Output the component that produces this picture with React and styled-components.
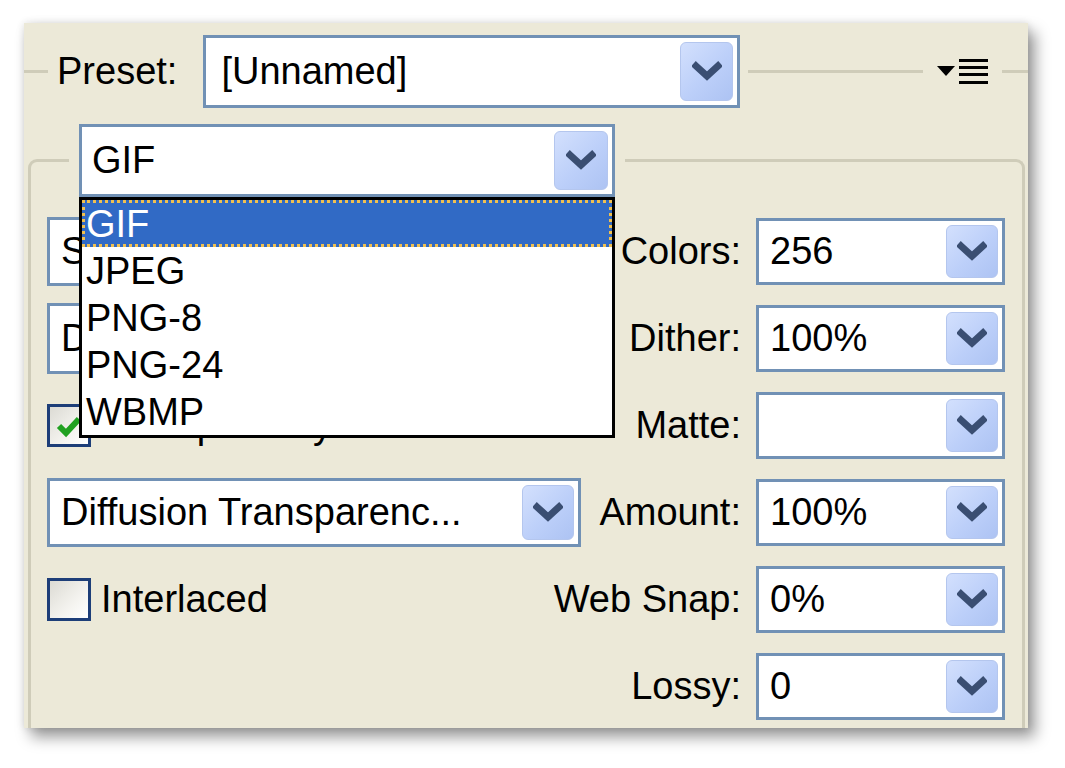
import React from 'react';
import styled, { createGlobalStyle } from 'styled-components';

const GlobalStyle = createGlobalStyle`
  html, body {
    margin: 0;
    padding: 0;
    background: #ffffff;
  }
  body {
    font-family: 'Liberation Sans', Arial, sans-serif;
    color: #000000;
  }
`

const Page = styled.div`
  width: 1065px;
  height: 768px;
  padding: 23px 0 0 24px;
  box-sizing: border-box;
`

const Panel = styled.div`
  width: 1004px;
  height: 705px;
  background: #ece9d8;
  box-sizing: border-box;
  padding-top: 12px;
  overflow: hidden;
  box-shadow: 7px 9px 14px rgba(0, 0, 0, 0.4), 0 0 8px rgba(0, 0, 0, 0.12);
`

const PresetRow = styled.div`
  display: flex;
  align-items: center;
  height: 73px;
`

const Rule = styled.div`
  height: 3px;
  background: #cfccb9;
  flex: ${p => (p.grow ? '1' : 'none')};
  width: ${p => (p.w ? p.w + 'px' : 'auto')};
  margin-left: ${p => p.ml || 0}px;
`

const PresetLabel = styled.span`
  font-size: 38px;
  margin: 0 26px 0 9px;
  white-space: nowrap;
`

const Combo = styled.div`
  position: relative;
  width: ${p => p.w}px;
  height: ${p => p.h || 67}px;
  box-sizing: border-box;
  border: 3px solid #7191b5;
  background: #ffffff;
  display: flex;
  align-items: center;
  padding: 0 4px 0 ${p => p.pad || 11}px;
  font-size: 38px;
  white-space: nowrap;
`

const ComboText = styled.span`
  flex: 1;
  overflow: hidden;
`

const DropButton = styled.div`
  width: ${p => p.w || 52}px;
  align-self: stretch;
  margin: 4px 0;
  box-sizing: border-box;
  border-radius: 6px;
  border: 1px solid #b4c6ee;
  background: linear-gradient(135deg, #d3e0fd 0%, #bccff9 55%, #adc3f3 100%);
  display: flex;
  align-items: center;
  justify-content: center;
`

const MenuIcon = styled.div`
  display: flex;
  align-items: center;
  margin: 0 14px;
`

const Group = styled.fieldset`
  margin: 16px 3px 0 4px;
  padding: 21px 17px 0 16px;
  border: 3px solid #cfccb9;
  border-bottom: none;
  border-radius: 9px 9px 0 0;
  min-width: 0;
  height: 700px;
  box-sizing: border-box;
`

const FormatLegend = styled.legend`
  position: relative;
  margin-left: 22px;
  padding: 0 10px;
`

const FormatList = styled.ul`
  position: absolute;
  top: 100%;
  left: 10px;
  width: 536px;
  box-sizing: border-box;
  margin: 0;
  padding: 0;
  list-style: none;
  background: #ffffff;
  border: 3px solid #000000;
  z-index: 5;
`

const FormatItem = styled.li`
  height: 47px;
  line-height: 43px;
  box-sizing: border-box;
  padding-left: 1px;
  font-size: 38px;
  color: ${p => (p.active ? '#ffffff' : '#000000')};
  background: ${p => (p.active ? '#316ac5' : 'transparent')};
  border: 3px dotted ${p => (p.active ? '#f0c050' : 'transparent')};
`

const Grid = styled.div`
  display: grid;
  grid-template-columns: 500px minmax(0, 1fr) 249px;
  grid-auto-rows: 67px;
  row-gap: 20px;
  align-items: center;
`

const FieldLabel = styled.span`
  grid-column: 2;
  justify-self: end;
  padding-right: 15px;
  font-size: 38px;
  white-space: nowrap;
`

const Left = styled.div`
  grid-column: 1;
`

const Right = styled.div`
  grid-column: 3;
`

const CheckRow = styled.label`
  display: flex;
  align-items: center;
  gap: 10px;
  font-size: 38px;
  white-space: nowrap;
`

const CheckBox = styled.span`
  flex: none;
  width: 44px;
  height: 43px;
  box-sizing: border-box;
  border: 3px solid #1d3e78;
  background: linear-gradient(135deg, #dcdbd4 0%, #f4f3ef 60%, #ffffff 100%);
  display: flex;
  align-items: center;
  justify-content: center;
`

function Chevron() {
  return (
    <svg width="30" height="22" viewBox="0 0 30 22">
      <polyline
        points="4,5 15,15 26,5"
        fill="none"
        stroke="#3a4e72"
        strokeWidth="7"
        strokeLinecap="square"
        strokeLinejoin="miter"
      />
    </svg>
  );
}

function Select({ value, w, h, pad, bw }) {
  return (
    <Combo w={w} h={h} pad={pad}>
      <ComboText>{value}</ComboText>
      <DropButton w={bw}>
        <Chevron />
      </DropButton>
    </Combo>
  );
}

function Check({ checked, label }) {
  return (
    <CheckRow>
      <CheckBox>
        {checked && (
          <svg width="26" height="24" viewBox="0 0 26 24">
            <polyline points="3,12 10,19 23,5" fill="none" stroke="#21a121" strokeWidth="6" />
          </svg>
        )}
      </CheckBox>
      {label}
    </CheckRow>
  );
}

const formats = ['GIF', 'JPEG', 'PNG-8', 'PNG-24', 'WBMP'];

export default function App() {
  return (
    <Page>
      <GlobalStyle />
      <Panel>
        <PresetRow>
          <Rule w={24} />
          <PresetLabel>Preset:</PresetLabel>
          <Select value="[Unnamed]" w={537} h={73} pad={15} bw={53} />
          <Rule grow ml={8} />
          <MenuIcon>
            <svg width="51" height="27" viewBox="0 0 51 27">
              <polygon points="0,8 18,8 9,18" fill="#000" />
              <rect x="22" y="1" width="29" height="3" fill="#000" />
              <rect x="22" y="8" width="29" height="3" fill="#000" />
              <rect x="22" y="15" width="29" height="3" fill="#000" />
              <rect x="22" y="23" width="29" height="3" fill="#000" />
            </svg>
          </MenuIcon>
          <Rule w={26} />
        </PresetRow>

        <Group>
          <FormatLegend>
            <Select value="GIF" w={536} h={73} pad={10} bw={54} />
            <FormatList>
              {formats.map((f, i) => (
                <FormatItem key={f} active={i === 0}>{f}</FormatItem>
              ))}
            </FormatList>
          </FormatLegend>

          <Grid>
            <Left><Select value="Selective" w={534} h={69} /></Left>
            <FieldLabel>Colors:</FieldLabel>
            <Right><Select value="256" w={249} /></Right>

            <Left><Select value="Diffusion" w={534} h={71} /></Left>
            <FieldLabel>Dither:</FieldLabel>
            <Right><Select value="100%" w={249} /></Right>

            <Left><Check checked label="Transparency" /></Left>
            <FieldLabel>Matte:</FieldLabel>
            <Right><Select value="" w={249} /></Right>

            <Left><Select value="Diffusion Transparenc..." w={534} h={69} /></Left>
            <FieldLabel>Amount:</FieldLabel>
            <Right><Select value="100%" w={249} /></Right>

            <Left><Check label="Interlaced" /></Left>
            <FieldLabel>Web Snap:</FieldLabel>
            <Right><Select value="0%" w={249} /></Right>

            <FieldLabel>Lossy:</FieldLabel>
            <Right><Select value="0" w={249} /></Right>
          </Grid>
        </Group>
      </Panel>
    </Page>
  );
}
